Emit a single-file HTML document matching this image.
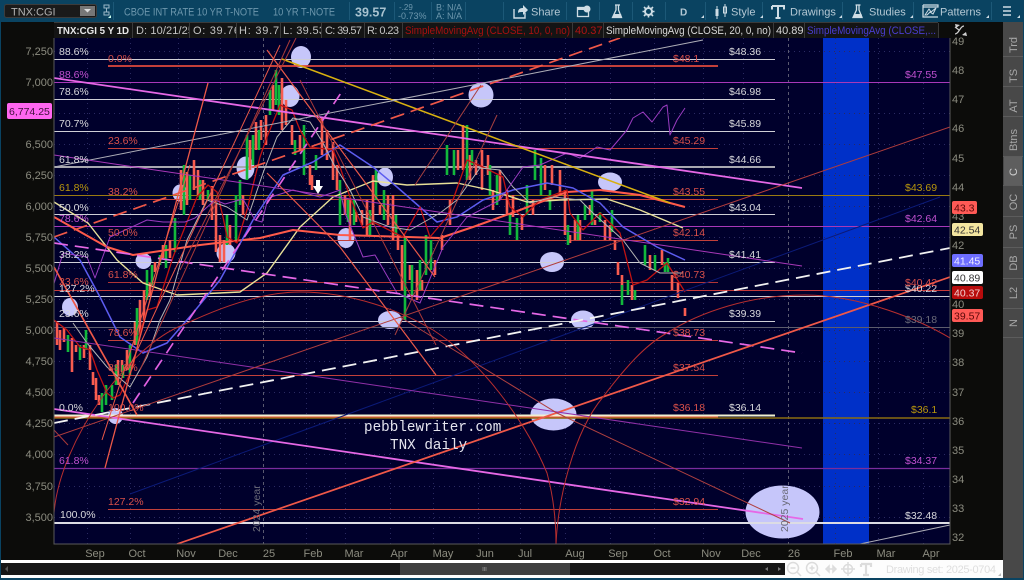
<!DOCTYPE html>
<html><head><meta charset="utf-8"><title>TNX:CGI</title>
<style>
html,body{margin:0;padding:0;background:#000}
svg.root{display:block;filter:blur(.35px)}
text{font-family:"Liberation Sans",sans-serif;font-size:10.5px}
.w text{fill:#d8d8dc}.r text{fill:#d8504a}.m text{fill:#c050d0}.g text{fill:#b8960c}
.ax text{fill:#8c8c80;font-size:11px}
.side text{fill:#a8a8a8;font-size:11px}
.t text{fill:#6d97ad;font-size:11px}
.b text{fill:#b4c8d4;font-size:11px}
.lg text{fill:#c4c4c4;font-size:11px}
</style></head><body>
<svg class="root" width="1024" height="580" viewBox="0 0 1024 580" xmlns="http://www.w3.org/2000/svg">
<defs><clipPath id="c"><rect x="54" y="38" width="896" height="506"/></clipPath></defs>
<rect width="1024" height="580" fill="#0c0c0a"/>
<rect width="1024" height="22" fill="#0a4361"/>
<rect x="0" y="22" width="1" height="558" fill="#0a4361"/>
<rect y="578" width="1024" height="2" fill="#0a4361"/>
<rect x="1023" y="22" width="1" height="558" fill="#0a4361"/>

<!-- toolbar left -->
<rect x="4.500" y="4.500" width="92" height="13" rx="2" fill="#1a1a1a" stroke="#3c3c3c"/>
<text x="11" y="15.500" style="font-size:11px" fill="#b0b0b0">TNX:CGI</text>
<rect x="80" y="6" width="15" height="10" fill="#777"/><path d="M84 9h7l-3.500 3.500z" fill="#ddd"/>
<path d="M104 5h5v3h-5zM104 12h5v3h-5zM106.500 8v4" stroke="#9bb7c6" fill="none"/><path d="M108 18l3-3v3z" fill="#cfe"/>
<g fill="#1c5877"><rect x="113" y="2" width="1" height="18"/><rect x="349" y="2" width="1" height="18"/><rect x="394" y="2" width="1" height="18"/><rect x="431" y="2" width="1" height="18"/><rect x="465" y="2" width="1" height="18"/><rect x="503" y="2" width="1" height="18"/><rect x="566" y="2" width="1" height="18"/><rect x="599" y="2" width="1" height="18"/><rect x="632" y="2" width="1" height="18"/><rect x="665" y="2" width="1" height="18"/><rect x="705" y="2" width="1" height="18"/><rect x="762" y="2" width="1" height="18"/><rect x="842" y="2" width="1" height="18"/><rect x="913" y="2" width="1" height="18"/><rect x="991" y="2" width="1" height="18"/></g>
<g class="t"><text x="124" y="15.500" textLength="135" lengthAdjust="spacingAndGlyphs">CBOE INT RATE 10 YR T-NOTE</text><text x="273" y="15.500" textLength="62" lengthAdjust="spacingAndGlyphs">10 YR T-NOTE</text>
<text x="399" y="10" style="font-size:8px">-.29</text><text x="398" y="19" style="font-size:9px">-0.73%</text><text x="436" y="10.500" style="font-size:9px">B: N/A</text><text x="436" y="19" style="font-size:9px">A: N/A</text></g>
<text x="355" y="16.500" style="font-size:12.500px;font-weight:700" fill="#a8c2cf">39.57</text>

<!-- toolbar right -->
<path d="M514 9v9h11v-5" fill="none" stroke="#cfdde5" stroke-width="1.400"/><path d="M518 13c0-4 2-5 5-5V5l5 5-5 5v-3c-2 0-4 0-5 1z" fill="#cfdde5"/>
<g class="b"><text x="531" y="15.500">Share</text><text x="731" y="15.500">Style</text><text x="790" y="15.500">Drawings</text><text x="869" y="15.500">Studies</text><text x="940" y="15.500">Patterns</text><text x="680" y="15.500" style="font-weight:700;font-size:10px">D</text></g>
<rect x="577.500" y="7.500" width="11" height="9" fill="none" stroke="#cfdde5" stroke-width="1.300"/><rect x="577" y="7" width="12" height="3" fill="#cfdde5"/><circle cx="587" cy="9" r="3.500" fill="#cfdde5"/>
<path d="M615 5h5M616 5v5l-3.500 7.500h9L618.500 10V5" fill="none" stroke="#cfdde5" stroke-width="1.300"/><path d="M614 14h7l1 3.500h-9z" fill="#cfdde5"/>
<g transform="translate(240.500,0)"><path d="M615 5h5M616 5v5l-3.500 7.500h9L618.500 10V5" fill="none" stroke="#cfdde5" stroke-width="1.300"/><path d="M614 14h7l1 3.500h-9z" fill="#cfdde5"/></g>
<circle cx="648.500" cy="11.500" r="3.500" fill="none" stroke="#cfdde5" stroke-width="2"/><path d="M648.500 5.500v2M648.500 15.500v2M642.500 11.500h2M652.500 11.500h2M644 7l1.500 1.500M653 7l-1.500 1.500M644 16l1.500-1.500M653 16l-1.500-1.500" stroke="#cfdde5" stroke-width="1.600"/>
<path d="M717 6v13M725 4v13" stroke="#cfdde5"/><rect x="715.500" y="9" width="3" height="7" fill="#cfdde5"/><rect x="723.500" y="7" width="3" height="6" fill="none" stroke="#cfdde5"/>
<path d="M772 6h12v3.500M772 6v3.500M778 6v12M775.500 18h5" fill="none" stroke="#cfdde5" stroke-width="2"/>
<path d="M923 5v12h15M923 5h15v2h-15" fill="none" stroke="#cfdde5" stroke-width="1.200"/><path d="M925 15l4-6 2 3 5-4-3 6-3-2-3 3z" fill="none" stroke="#cfdde5"/>
<path d="M1003 7h8M1003 11h8M1003 15h8" stroke="#cfdde5" stroke-width="1.500"/>
<g fill="#cfdde5"><path d="M701 18l3-3v3zM760 18l3-3v3zM839 18l3-3v3zM910 18l3-3v3zM986 18l3-3v3zM1017 18l3-3v3z"/></g>

<!-- legend -->
<rect x="54" y="22" width="884" height="16" fill="#141414"/>
<g fill="none" stroke="#3a3a3a"><path d="M132.500 23v15M189.500 23v15M236.500 23v15M280.500 23v15M321.500 23v15M364.500 23v15M402.500 23v15M572.500 23v15M603.500 23v15M773.500 23v15M804.500 23v15M938.500 23v15M54 22.500h884"/></g>
<g class="lg"><text x="57" y="34" style="font-weight:700;fill:#e8e8e8;font-size:10.500px" textLength="72" lengthAdjust="spacingAndGlyphs">TNX:CGI 5 Y 1D</text>
<svg x="136" y="22" width="53" height="16"><text x="0" y="12" textLength="58">D: 10/21/25</text></svg>
<svg x="193" y="22" width="43" height="16"><text x="0" y="12" textLength="47">O: 39.76</text></svg>
<svg x="239" y="22" width="41" height="16"><text x="0" y="12" textLength="47">H: 39.76</text></svg>
<svg x="283" y="22" width="38" height="16"><text x="0" y="12" textLength="42">L: 39.53</text></svg>
<text x="325" y="34" textLength="37">C: 39.57</text><text x="367" y="34" textLength="32">R: 0.23</text>
<text x="405" y="34" style="fill:#a81010" textLength="165" lengthAdjust="spacingAndGlyphs">SimpleMovingAvg (CLOSE, 10, 0, no)</text><text x="575" y="34" style="fill:#b01414">40.37</text><text x="606" y="34" textLength="165" lengthAdjust="spacingAndGlyphs" style="fill:#d8d8d8">SimpleMovingAvg (CLOSE, 20, 0, no)</text><text x="776" y="34" style="fill:#d8d8d8">40.89</text><text x="807" y="34" textLength="129" lengthAdjust="spacingAndGlyphs" style="fill:#4a3ed0">SimpleMovingAvg (CLOSE,...</text></g>
<path d="M955 34c4 0 5-8 9-8M955 27l4 3M963 35l3-2" fill="none" stroke="#cfcfcf" stroke-width="1.200"/><path d="M955 24l5 1-4 3zM967 36l-5-1 4-3z" fill="#cfcfcf"/>

<!-- chart bg -->
<rect x="54" y="38" width="896" height="506" fill="#00002c"/>
<rect x="823" y="38" width="46" height="506" fill="#0030c8"/>
<g clip-path="url(#c)">
<!-- grid -->
<g stroke="#2a2a62" stroke-dasharray="1 4" fill="none">
<path d="M54 51.500H950M54 82.500H950M54 113.500H950M54 144.500H950M54 175.500H950M54 206.500H950M54 237.500H950M54 268.500H950M54 299.500H950M54 330.500H950M54 361.500H950M54 392.500H950M54 423.500H950M54 454.500H950M54 486.500H950M54 517.500H950"/>
<path d="M87.500 38V544M130.500 38V544M178.500 38V544M220.500 38V544M306.500 38V544M345.500 38V544M390.500 38V544M433.500 38V544M478.500 38V544M520.500 38V544M565.500 38V544M610.500 38V544M654.500 38V544M703.500 38V544M743.500 38V544M835.500 38V544M878.500 38V544M923.500 38V544"/></g>
<g stroke="#5a5a70" stroke-dasharray="3 3" fill="none"><path d="M263.500 38V544M788.500 38V544"/></g>
<!-- ellipses -->
<g fill="#c6c6fa">
<ellipse cx="301" cy="57" rx="10" ry="11"/><ellipse cx="290" cy="96" rx="9.500" ry="11"/><ellipse cx="481" cy="95" rx="12.500" ry="12.500"/><ellipse cx="245.500" cy="168" rx="9" ry="11.500"/><ellipse cx="180" cy="193" rx="7.500" ry="8.500"/><ellipse cx="143.500" cy="261" rx="8" ry="8"/><ellipse cx="226" cy="253" rx="9.500" ry="9.500"/><ellipse cx="385" cy="177" rx="8" ry="9.500"/><ellipse cx="346" cy="238" rx="8.500" ry="10"/><ellipse cx="610" cy="182" rx="12" ry="9.500"/><ellipse cx="552" cy="262" rx="12" ry="10"/><ellipse cx="390" cy="320" rx="12" ry="9"/><ellipse cx="583" cy="320" rx="12" ry="9.500"/><ellipse cx="553.500" cy="414.500" rx="23" ry="16"/><ellipse cx="115.500" cy="416" rx="7.500" ry="8"/><ellipse cx="70" cy="307" rx="8" ry="9"/><ellipse cx="782.500" cy="512" rx="37" ry="26.500"/></g>
<!-- horizontal lines -->
<g fill="none">
<g stroke="#cfcfd6"><path d="M54 59.500H775M54 99.500H775M54 131.500H775M54 214.500H775M54 262.500H775M54 296.500H950M54 321.500H775"/></g>
<path d="M54 167H775" stroke="#a8a8b0" stroke-width="2"/><path d="M54 327.500H950" stroke="#5c5c6c"/>
<path d="M108 66H718" stroke="#e0483c" stroke-width="1.800"/>
<g stroke="#c2403a"><path d="M108 148.500H718M108 199.500H718M108 240.500H718M108 340.500H718M108 375.500H718M108 509.500H718"/><path d="M108 282.500H718" stroke="#b03436"/></g>
<path d="M54 290.500H950" stroke="#c83a3a"/>
<g stroke="#a838b8"><path d="M54 82.500H950M54 226.500H950"/><path d="M54 468.500H950" stroke="#7a2c9c" stroke-width="1.300"/></g>
<path d="M54 195.500H950" stroke="#9a7a10"/>
<path d="M54 418H950" stroke="#8a6c10" stroke-width="1.500"/>
<path d="M54 415.500H775" stroke="#f0f0d0" stroke-width="2"/>
<path d="M54 417H718" stroke="#e8503c"/>
<path d="M54 523H950" stroke="#dcdce4" stroke-width="2"/>
</g>
<!-- candles -->
<g fill="none" stroke-width="2.600">
<path stroke="#f85c50" d="M57 322V345M60 330V350M64 328V342M72 338V372M76 345V352M84 345V358M90 345V370M93 372V385M96 378V400M99 395V405M118 360V385M122 360V372M127 350V370M135 322V345M140 300V335M144 290V320M150 283V296M155 262V272M163 245V258M170 240V258M181 170V210M187 172V205M194 160V190M198 170V195M203 180V205M212 186V220M216 200V252M220 235V262M224 240V262M230 225V245M243 195V215M250 140V170M256 122V150M261 120V140M266 115V145M273 85V110M282 78V130M286 100V125M292 125V145M300 135V150M310 165V185M312 175V190M322 118V155M327 130V160M333 142V180M337 165V190M345 195V215M350 200V240M356 212V222M362 210V225M367 200V235M373 175V225M380 205V215M388 195V225M393 195V240M398 235V250M402 245V290M410 265V280M417 270V300M422 280V290M435 260V275M442 235V250M450 200V225M458 150V170M463 125V170M470 155V180M476 160V175M482 150V190M488 155V175M493 190V210M500 170V200M507 190V215M513 195V217M522 215V230M533 200V215M545 165V190M552 165V185M560 170V195M565 190V235M570 235V243M575 220V240M580 220V240M590 205V215M595 220V225M605 220V240M610 225V240M615 240V250M618 262V275M622 275V290M632 285V300M650 255V270M662 250V265M672 275V290M678 283V298M685 308V316"/>
<path stroke="#12b83c" d="M68 335V352M80 345V360M86 330V350M102 393V412M106 385V405M112 385V400M116 365V385M123 365V378M130 345V375M137 308V345M147 270V300M152 265V285M160 255V265M166 245V268M175 218V252M184 165V215M190 175V200M200 180V200M208 190V200M227 215V245M236 195V240M240 180V205M247 135V180M253 135V165M259 130V150M270 90V115M276 70V105M279 85V115M295 140V155M304 125V175M316 155V170M340 180V225M348 200V222M354 200V225M370 210V235M376 170V200M384 190V220M396 215V235M405 238V320M412 265V295M420 260V290M426 235V275M431 240V270M447 145V175M454 150V175M467 125V180M472 150V165M490 165V195M497 175V205M510 215V235M517 218V240M527 185V215M535 150V180M541 158V195M550 190V210M568 225V245M578 215V240M585 205V220M592 190V225M600 212V222M612 210V232M622 285V305M628 280V295M635 290V300M645 245V265M655 255V270M665 262V272M668 258V272"/>
</g>
<!-- moving averages -->
<g fill="none" stroke-linejoin="round">
<polyline stroke="#e8e098" stroke-width="1.400" points="54,202 88,223 117,260 143,283 177,295 240,292 267,273 300,227 333,197 373,181 407,185 457,183 490,190 527,202 560,200 607,199 640,210 683,228"/>
<polyline stroke="#ff5a4a" stroke-width="2" points="54,217 107,247 133,255 167,250 200,245 260,238 293,230 340,235 440,238 473,227 520,210 567,192 600,190 640,195 685,207"/>
<polyline stroke="#5c5cf0" stroke-width="1.500" points="54,237 80,260 100,297 120,337 143,353 167,343 193,313 220,280 253,220 283,175 313,162 340,145 373,167 397,187 437,222 457,217 483,200 513,190 547,183 573,188 600,203 623,227 657,247 685,260"/>
<polyline stroke="#c01212" stroke-width="1.300" points="54,320 67,330 80,347 90,350 97,370 107,393 113,398 120,395 133,367 140,333 147,310 157,307 173,257 197,197 208,185 217,192 223,217 227,237 237,243 247,210 260,157 267,137 280,105 292,110 300,130 310,147 333,150 340,167 350,197 363,228 373,222 403,237 420,207 430,237 447,217 467,160 483,167 503,177 510,207 523,217 540,200 567,190 570,213 583,230 600,213 620,233 633,285 647,280 667,263 685,292"/>
<polyline stroke="#b4b4b4" points="73,323 87,343 107,367 130,387 147,357 160,320 170,300 187,240 207,200 227,207 247,220 263,173 277,137 293,118 310,122 323,143 333,163 350,190 363,217 390,227 410,230 440,213 457,200 480,168 500,170 513,187 530,203 553,197 580,200 593,213 623,240 640,263 660,273 683,273"/>
<polyline stroke="#9a3cc0" points="53,287 63,253 87,257 95,278 110,237 147,220 163,222 185,222 195,218 215,200 225,204 243,199 255,220 262,222 268,198 293,190 320,197 340,190 345,213 363,257 375,255 397,293 420,303 443,247 467,217 500,200 523,167 540,165 567,153 580,158 597,147 610,150 627,130 633,118 643,112 652,122 663,107 667,105 670,135 677,120 685,108"/>
</g>
<!-- sloped lines -->
<g fill="none">
<path d="M130 494L940 197" stroke="#0b1a78"/>
<path d="M54 78L802 188" stroke="#e668e6" stroke-width="1.800"/>
<path d="M54 409L803 519" stroke="#e668e6" stroke-width="1.800"/>
<path d="M54 243L802 353" stroke="#e668e6" stroke-width="1.700" stroke-dasharray="14 7"/>
<path d="M133 403L345 87" stroke="#e060e0" stroke-width="1.700" stroke-dasharray="12 8"/>
<path d="M54 423L950 248" stroke="#f2f2f2" stroke-width="1.800" stroke-dasharray="14 7"/>
<path d="M282 59L670 203" stroke="#d8b010" stroke-width="1.600"/>
<path d="M177 544L950 277" stroke="#f05848" stroke-width="1.700"/>
<path d="M54 237L620 38" stroke="#f05848" stroke-width="1.700" stroke-dasharray="14 7"/>
<path d="M54 167L703 40" stroke="#aeaeb8"/>
<path d="M860 544L950 525" stroke="#aeaeb8"/>
<path d="M54 155L802 266" stroke="#a838b8"/>
<path d="M54 338L802 448" stroke="#9030a8"/>
<path d="M54 437L950 127" stroke="#b03c3c"/>
<path d="M54 513C60 440 130 345 183 325C225 305 265 292 300 292C350 292 400 310 433 330C480 360 525 420 547 473C553 495 556 520 556 544" stroke="#b82e2e"/>
<path d="M556 544C558 500 573 433 603 397C625 368 645 345 667 333C700 312 750 295 805 295C860 295 920 320 950 338" stroke="#b82e2e"/>
<path d="M267 50L435 277" stroke="#e85848" stroke-width="1.200"/>
<path d="M267 173L340 247L436 375" stroke="#e85848" stroke-width="1.200"/>
<path d="M300 80L436 345" stroke="#a83838"/>
<path d="M54 267L137 415" stroke="#ee5848" stroke-width="1.700"/>
<path d="M54 430L68 445" stroke="#a83838"/>
<path d="M105 468L208 83" stroke="#ee5848" stroke-width="1.300"/>
<path d="M102 440L190 165" stroke="#ee5848"/>
<path d="M128 370L280 45" stroke="#e85848"/>
<path d="M140 370L290 40" stroke="#a83838"/>
<path d="M180 270L296 38" stroke="#a83838"/>
<path d="M395 335L497 115" stroke="#a84040"/>
<path d="M415 185L481 85" stroke="#a84040"/>
<path d="M400 317L557 413L790 523" stroke="#b04040"/>
</g>
<path d="M316 180h4v6h3l-5 8-5-8h3z" fill="#fff"/>
<!-- texts -->
<g class="w"><text x="59" y="55">88.6%</text><text x="59" y="95">78.6%</text><text x="59" y="127">70.7%</text><text x="59" y="163">61.8%</text><text x="59" y="211">50.0%</text><text x="59" y="258">38.2%</text><text x="59" y="292">127.2%</text><text x="59" y="317">23.6%</text><text x="59" y="411">0.0%</text><text x="60" y="518">100.0%</text>
<text x="729" y="55">$48.36</text><text x="729" y="95">$46.98</text><text x="729" y="127">$45.89</text><text x="729" y="163">$44.66</text><text x="729" y="211">$43.04</text><text x="729" y="258">$41.41</text><text x="729" y="317">$39.39</text><text x="729" y="411">$36.14</text><text x="905" y="292">$40.22</text><text x="905" y="519">$32.48</text></g>
<g class="r"><text x="108" y="62">0.0%</text><text x="108" y="144">23.6%</text><text x="108" y="195">38.2%</text><text x="108" y="236">50.0%</text><text x="108" y="278">61.8%</text><text x="108" y="336">78.6%</text><text x="108" y="371">88.6%</text><text x="108" y="411">100.0%</text><text x="108" y="505">127.2%</text><text x="59" y="285">23.6%</text>
<text x="673" y="62">$48.1</text><text x="673" y="144">$45.29</text><text x="673" y="195">$43.55</text><text x="673" y="236">$42.14</text><text x="673" y="278">$40.73</text><text x="673" y="336">$38.73</text><text x="673" y="371">$37.54</text><text x="673" y="411">$36.18</text><text x="673" y="505">$32.94</text><text x="905" y="286">$40.42</text></g>
<g class="m"><text x="59" y="78">88.6%</text><text x="59" y="222">78.6%</text><text x="59" y="464">61.8%</text><text x="905" y="78">$47.55</text><text x="905" y="222">$42.64</text><text x="905" y="464">$34.37</text></g>
<g class="g"><text x="59" y="191">61.8%</text><text x="905" y="191">$43.69</text><text x="911" y="413">$36.1</text></g>
<text x="905" y="323" fill="#6a6a78">$39.18</text>
<text x="364" y="431" style="font-family:'Liberation Mono',monospace;font-size:14.300px" fill="#e4e4ee">pebblewriter.com</text>
<text x="390" y="449" style="font-family:'Liberation Mono',monospace;font-size:14.300px" fill="#e4e4ee">TNX daily</text>
<text transform="translate(260,532) rotate(-90)" fill="#6a6a78">2024 year</text>
<text transform="translate(788,532) rotate(-90)" fill="#6a6a78">2025 year</text>
</g>
<path d="M54 38V544H950V38" fill="none" stroke="#5a5a5a"/>

<!-- left axis -->
<g class="ax" text-anchor="end"><text x="53" y="55">7,250</text><text x="53" y="86">7,000</text><text x="53" y="148">6,500</text><text x="53" y="179">6,250</text><text x="53" y="210">6,000</text><text x="53" y="241">5,750</text><text x="53" y="272">5,500</text><text x="53" y="303">5,250</text><text x="53" y="334">5,000</text><text x="53" y="365">4,750</text><text x="53" y="396">4,500</text><text x="53" y="427">4,250</text><text x="53" y="458">4,000</text><text x="53" y="490">3,750</text><text x="53" y="521">3,500</text></g>
<rect x="7" y="103" width="45" height="16" rx="2" fill="#ff66f0"/><text x="9" y="115" fill="#40103a">6,774.25</text>

<!-- right axis -->
<g class="ax"><text x="952" y="45">49</text><text x="952" y="74">48</text><text x="952" y="103">47</text><text x="952" y="132">46</text><text x="952" y="162">45</text><text x="952" y="191">44</text><text x="952" y="220">43</text><text x="952" y="249">42</text><text x="952" y="308">40</text><text x="952" y="337">39</text><text x="952" y="366">38</text><text x="952" y="396">37</text><text x="952" y="425">36</text><text x="952" y="454">35</text><text x="952" y="483">34</text><text x="952" y="512">33</text><text x="952" y="541">32</text></g>
<rect x="952" y="201" width="25" height="13" rx="2" fill="#ff5a56"/><text x="954" y="211.500" fill="#5a0808">43.3</text>
<rect x="952" y="223" width="31" height="13" rx="2" fill="#f4e6a0"/><text x="954" y="233.500" fill="#333">42.54</text>
<rect x="952" y="254" width="31" height="13" rx="2" fill="#6e6eff"/><text x="954" y="264.500" fill="#f0f0ff">41.45</text>
<rect x="952" y="271" width="31" height="13" rx="2" fill="#fff"/><text x="954" y="281.500" fill="#333">40.89</text>
<rect x="952" y="286" width="31" height="13" rx="2" fill="#b80c0c"/><text x="954" y="296.500" fill="#f0d0d0">40.37</text>
<rect x="952" y="309" width="31" height="13" rx="2" fill="#ff5a56"/><text x="954" y="319.500" fill="#5a0808">39.57</text>

<!-- date axis -->
<g class="ax" text-anchor="middle"><text x="95" y="557">Sep</text><text x="137" y="557">Oct</text><text x="186" y="557">Nov</text><text x="228" y="557">Dec</text><text x="269" y="557">25</text><text x="313" y="557">Feb</text><text x="354" y="557">Mar</text><text x="399" y="557">Apr</text><text x="443" y="557">May</text><text x="485" y="557">Jun</text><text x="525" y="557">Jul</text><text x="575" y="557">Aug</text><text x="618" y="557">Sep</text><text x="662" y="557">Oct</text><text x="711" y="557">Nov</text><text x="751" y="557">Dec</text><text x="794" y="557">26</text><text x="843" y="557">Feb</text><text x="886" y="557">Mar</text><text x="931" y="557">Apr</text></g>

<!-- bottom bar -->
<rect x="1" y="560" width="1002" height="18" fill="#fdfdfd"/>
<rect x="1" y="563" width="784" height="12" fill="#161616"/>
<rect x="400" y="563" width="170" height="12" fill="#3e3e3e"/>
<path d="M483 567v4M484.500 567v4M486 567v4" stroke="#888" stroke-width=".8"/>
<path d="M8 566l-3 3 3 3z" fill="#555"/><path d="M768 567l-3 2 3 2zM778 567l3 2-3 2z" fill="#777"/>
<g fill="none" stroke="#dcdcdc" stroke-width="1.500"><circle cx="793" cy="568" r="5.500"/><path d="M790.500 568h5M797 572l4 4"/><circle cx="812" cy="568" r="5.500"/><path d="M809.500 568h5M812 565.500v5M816 572l4 4"/><path d="M826 569h10M826 569l3-3v6zM836 569l-3-3v6z"/><circle cx="848" cy="569" r="4.500"/><path d="M848 562v14M841 569h14"/><path d="M861 564h10v3M861 564v3M866 564v11M863 575h6" stroke-width="2.200"/></g>
<text x="886" y="573" style="font-size:11px" fill="#dedede" textLength="110">Drawing set: 2025-0704</text>
<path d="M998 576l3-3v3z" fill="#bbb"/>

<!-- sidebar -->
<rect x="1003" y="22" width="20" height="556" fill="#484848"/>
<rect x="1004" y="157" width="18" height="28" fill="#5e5e5e"/>
<path d="M1003 56.500h20M1003 86.500h20M1003 116.500h20M1003 156.500h20M1003 185.500h20M1003 216.500h20M1003 247.500h20M1003 278.500h20M1003 308.500h20M1003 337.500h20" stroke="#5c5c5c"/>
<g class="side" text-anchor="middle">
<text transform="translate(1017,45) rotate(-90)">Trd</text><text transform="translate(1017,76) rotate(-90)">TS</text><text transform="translate(1017,106) rotate(-90)">AT</text><text transform="translate(1017,140) rotate(-90)">Btns</text><text transform="translate(1017,172) rotate(-90)" style="fill:#ccc">C</text><text transform="translate(1017,202) rotate(-90)">OC</text><text transform="translate(1017,232) rotate(-90)">PS</text><text transform="translate(1017,263) rotate(-90)">DB</text><text transform="translate(1017,293) rotate(-90)">L2</text><text transform="translate(1017,323) rotate(-90)">N</text></g>
</svg>
</body></html>
